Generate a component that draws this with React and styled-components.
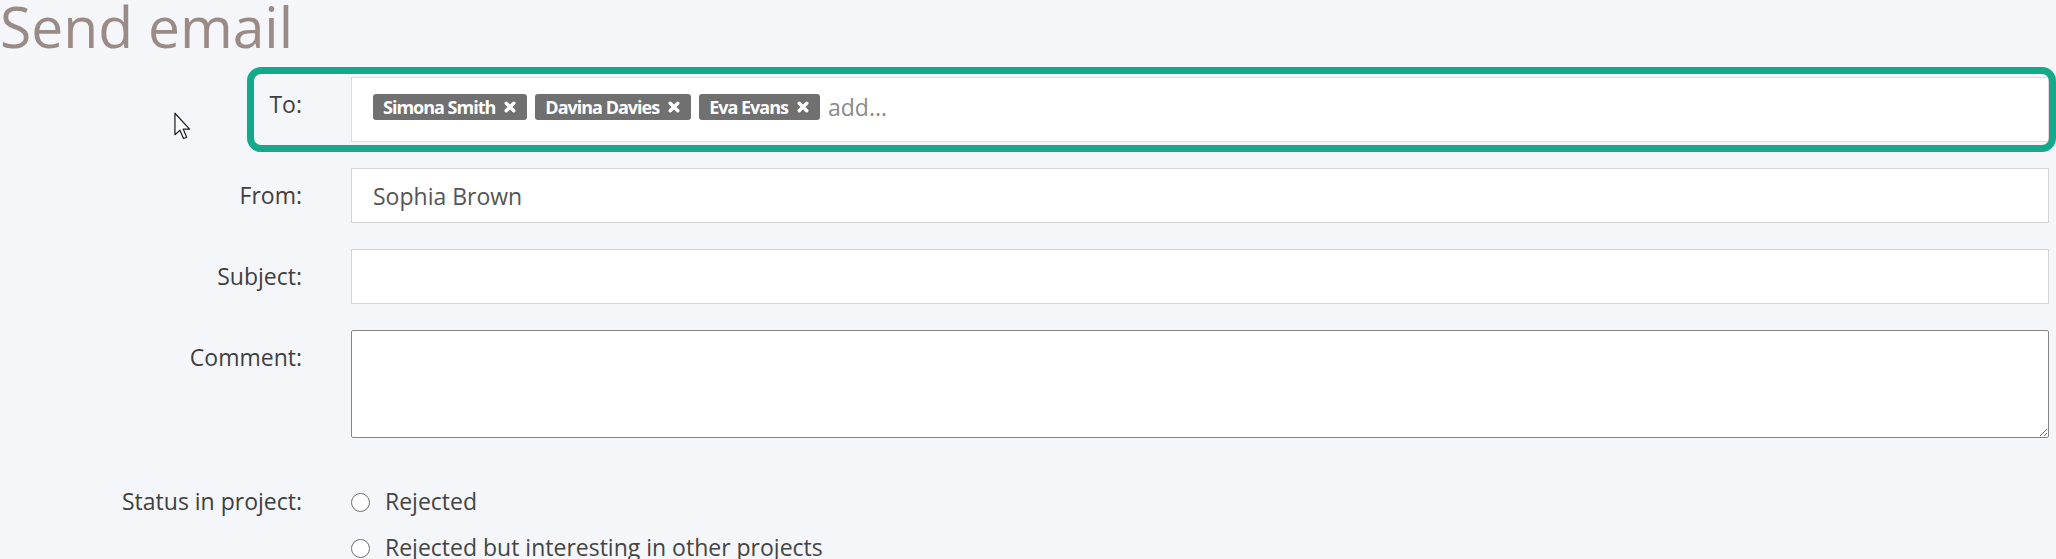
import React from 'react'
import styled, {createGlobalStyle} from 'styled-components'

const recipients = ['Simona Smith', 'Davina Davies', 'Eva Evans']
const statuses = ['Rejected', 'Rejected but interesting in other projects']

export default function App() {
  return (
    <>
      <GlobalStyle />
      <Page>
        <Title>Send email</Title>
        <Row>
          <Ring />
          <Label>To:</Label>
          <TagBox>
            {recipients.map(name => (
              <Tag key={name}>
                {name}
                <svg width="12" height="12" viewBox="0 0 12 12">
                  <path
                    d="M2.2 2.2 L9.8 9.8 M9.8 2.2 L2.2 9.8"
                    stroke="#fff"
                    strokeWidth="3.4"
                    strokeLinecap="round"
                  />
                </svg>
              </Tag>
            ))}
            <AddInput placeholder="add..." />
          </TagBox>
        </Row>
        <Row>
          <Label>From:</Label>
          <TextInput defaultValue="Sophia Brown" />
        </Row>
        <Row>
          <Label>Subject:</Label>
          <TextInput />
        </Row>
        <Row $gap={40}>
          <Label>Comment:</Label>
          <TextArea />
        </Row>
        <Row>
          <Label $lh={46}>Status in project:</Label>
          <Options>
            {statuses.map(s => (
              <Option key={s}>
                <Radio />
                {s}
              </Option>
            ))}
          </Options>
        </Row>
        <Cursor width="19" height="29" viewBox="0 0 14 23">
          <path
            d="M1 1 L1 18 L5 14.5 L7.8 21 L10.3 20 L7.6 13.6 L12.6 13.6 Z"
            fill="#fff"
            stroke="#222"
            strokeWidth="1"
            strokeLinejoin="round"
          />
        </Cursor>
      </Page>
    </>
  )
}

const GlobalStyle = createGlobalStyle`
  body {
    margin: 0;
    background: #f5f6fa;
    font-family: "Open Sans", "Liberation Sans", sans-serif;
  }
`

const Page = styled.div`
  position: relative;
  padding: 0 7px 0 0;
  height: 559px;
  overflow: hidden;
`

const Title = styled.h1`
  margin: 0 0 31px;
  padding-top: 6px;
  font-size: 57px;
  line-height: 40px;
  font-weight: 400;
  color: #9b8b86;
`

const Row = styled.div`
  position: relative;
  display: grid;
  grid-template-columns: 302px 1fr;
  column-gap: 49px;
  margin-bottom: ${props => props.$gap || 26}px;
`

const Ring = styled.div`
  position: absolute;
  top: -10px;
  bottom: -10px;
  left: 247px;
  right: -7px;
  border: 7px solid #14a98b;
  border-radius: 14px;
  pointer-events: none;
`

const Label = styled.label`
  text-align: right;
  font-size: 23px;
  line-height: ${props => props.$lh || 55}px;
  color: #3f3f3f;
`

const TextInput = styled.input`
  box-sizing: border-box;
  width: 100%;
  height: 55px;
  padding: 0 21px;
  border: 1px solid #d6d6d6;
  background: #fff;
  font-family: inherit;
  font-size: 23px;
  color: #555;
  outline: none;
`

const TagBox = styled.div`
  box-sizing: border-box;
  min-height: 65px;
  padding: 14px 21px;
  border: 1px solid #e6d8df;
  background: #fff;
  display: flex;
  flex-wrap: wrap;
  align-items: center;
  align-content: flex-start;
  gap: 8px;
`

const Tag = styled.span`
  display: inline-flex;
  align-items: center;
  gap: 9px;
  height: 26px;
  padding: 0 11px 0 10px;
  background: #707070;
  border-radius: 3px;
  color: #fff;
  font-size: 18px;
  font-weight: 700;
  letter-spacing: -1px;
`

const AddInput = styled.input`
  flex: 1;
  border: 0;
  padding: 0;
  height: 30px;
  background: transparent;
  font-family: inherit;
  font-size: 23px;
  color: #555;
  outline: none;

  &::placeholder {
    color: #8a8a8a;
  }
`

const TextArea = styled.textarea`
  display: block;
  box-sizing: border-box;
  width: 100%;
  height: 108px;
  border: 1.5px solid #858585;
  border-radius: 2px;
  background: #fff;
  resize: vertical;
  font-family: inherit;
  font-size: 23px;
  outline: none;
`

const Options = styled.div`
  display: flex;
  flex-direction: column;
`

const Option = styled.label`
  display: flex;
  align-items: center;
  gap: 15px;
  height: 46px;
  font-size: 23px;
  color: #444;
`

const Radio = styled.span`
  box-sizing: border-box;
  width: 19px;
  height: 19px;
  margin-top: 3px;
  border-radius: 50%;
  border: 1.5px solid #707070;
  background: #fff;
`

const Cursor = styled.svg`
  position: absolute;
  left: 173px;
  top: 112px;
`
